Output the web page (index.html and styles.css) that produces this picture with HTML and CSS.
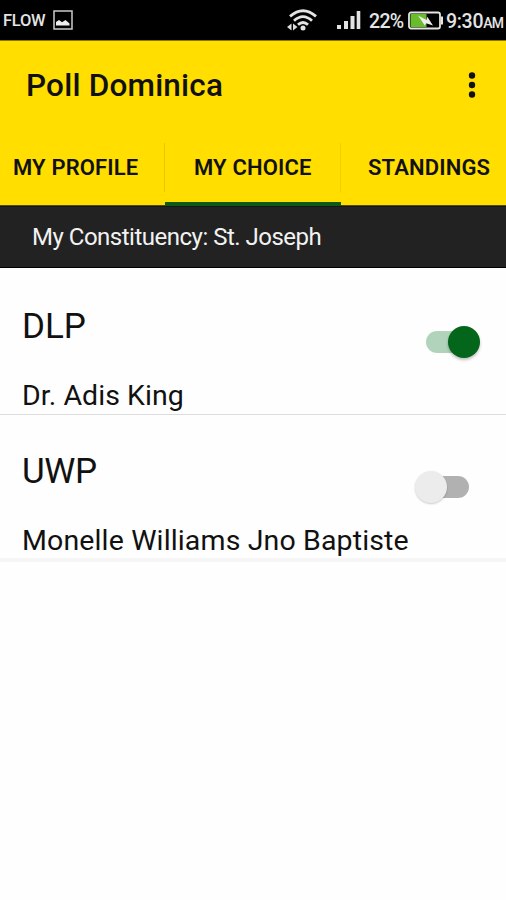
FILE: index.html
```html
<!DOCTYPE html>
<html lang="en">
<head>
<meta charset="utf-8">
<title>Poll Dominica</title>
<link rel="stylesheet" href="styles.css">
</head>
<body>
<div class="status">
  <span class="carrier">FLOW</span>
  <svg class="picture" width="20" height="20" viewBox="0 0 20 20"><rect x="1" y="1" width="18" height="18" fill="none" stroke="#ccc" stroke-width="1.5"/><path d="M3 15.5V12l3-2 3 2.3 3.5-2.3 4 3.5v2z" fill="#eee"/></svg>
  <svg class="wifi" width="32" height="24" viewBox="0 0 32 24"><g fill="none" stroke="#e4e4e4" stroke-width="2.8"><path d="M3 8.4Q16-3 29 8.4"/><path d="M7 12.8Q16 4.4 25 12.8"/><path d="M11 16.8Q16 12 21 16.8"/></g><circle cx="16" cy="20" r="2.5" fill="#e4e4e4"/><path d="M4.5 15.5v7L0 19zM6 15.5v7l4.5-3.5z" fill="#ddd"/></svg>
  <svg class="signal" width="25" height="20" viewBox="0 0 25 20"><path d="M1 15h4v4H1zM8 11h4v8H8zM14.5 6h4v13h-4zM20.7 1h3.6v18h-3.6z" fill="#e2e2e2"/></svg>
  <span class="percent">22%</span>
  <svg class="battery" width="36" height="19" viewBox="0 0 36 19"><rect x="1" y="1.5" width="31" height="16" rx="2" fill="#000" stroke="#e4e4e4" stroke-width="1.8"/><path d="M33 5.5h2v8h-2z" fill="#e4e4e4"/><path d="M2.5 3h16v13h-16z" fill="#69bd2b"/><path d="M10 4.5l8.5 4.5.8-3.3L25 14.5l-7-2.2-1.2 2.2z" fill="#eee"/></svg>
  <span class="clock">9:30<small>AM</small></span>
</div>
<header class="appbar">
  <h1>Poll Dominica</h1>
  <svg class="more" width="8" height="28" viewBox="0 0 8 28"><g fill="#111"><circle cx="4" cy="4.5" r="3.2"/><circle cx="4" cy="14" r="3.2"/><circle cx="4" cy="23.5" r="3.2"/></g></svg>
</header>
<nav class="tabs">
  <a class="tab profile">MY PROFILE</a>
  <a class="tab choice">MY CHOICE</a>
  <a class="tab standings">STANDINGS</a>
</nav>
<div class="constituency"><span>My Constituency: St. Joseph</span></div>
<main>
  <section class="item">
    <div class="info">
      <h2 class="dlp">DLP</h2>
      <p class="king">Dr. Adis King</p>
    </div>
    <div class="switch on"><i></i></div>
  </section>
  <section class="item last">
    <div class="info">
      <h2 class="uwp">UWP</h2>
      <p class="monelle">Monelle Williams Jno Baptiste</p>
    </div>
    <div class="switch off"><i></i></div>
  </section>
</main>
</body>
</html>
```
FILE: styles.css
```css
* { box-sizing: border-box; }
body {
  margin: 0;
  width: 506px;
  height: 900px;
  overflow: hidden;
  background: #fefefe;
  color: #111;
  font-family: Roboto, "Liberation Sans", sans-serif;
}
h1, h2, p { margin: 0; font-weight: 400; white-space: nowrap; }
svg { flex: none; display: block; }

.status {
  display: flex;
  align-items: center;
  height: 40px;
  background: #000;
  color: #e4e4e4;
  white-space: nowrap;
}
.carrier { width: 49px; padding: 1px 0 0 3px; font-size: 16.5px; font-weight: 500; line-height: 40px; letter-spacing: -0.3px; }
.picture { margin-left: 4px; }
.wifi { margin-left: 214px; }
.signal { margin-left: 17px; }
.percent { width: 39px; padding-top: 2px; margin-left: 8px; font-size: 19.5px; font-weight: 500; letter-spacing: -0.7px; }
.battery { margin-left: 0; }
.clock { padding-top: 2px; margin-left: 2px; font-size: 19.5px; font-weight: 500; letter-spacing: -0.3px; }
.clock small { font-size: 14px; letter-spacing: -0.8px; }

.appbar {
  display: flex;
  align-items: center;
  justify-content: space-between;
  height: 90px;
  padding: 0 30px 0 26px;
  background: #ffde00;
  border-top: 1px solid #8b7900;
}
.appbar h1 { font-size: 31.5px; font-weight: 500; letter-spacing: 0.2px; }
.more { margin-top: -2px; }

.tabs {
  display: grid;
  grid-template-columns: 165px 176px 165px;
  height: 76px;
  background: #ffde00;
  border-bottom: 1px solid #554b06;
}
.tab {
  display: flex;
  padding-top: 25px;
  font-size: 22px;
  font-weight: 600;
  line-height: 26px;
  letter-spacing: 0.15px;
  white-space: nowrap;
}
.profile { padding-left: 13px; background: linear-gradient(#e6c800, #e6c800) right 13px / 1px 49px no-repeat; }
.choice {
  padding-left: 29px;
  margin-bottom: -1px;
  border-bottom: 4px solid #0e5a14;
  background: linear-gradient(#edd000, #edd000) right 13px / 1px 49px no-repeat;
}
.standings { padding-left: 27px; }

.constituency {
  height: 62px;
  padding-left: 32px;
  background: #222;
  border-top: 1px solid #15151a;
  border-bottom: 1px solid #000;
  color: #f2f2f2;
  font-size: 24px;
  line-height: 60px;
  letter-spacing: -0.5px;
  white-space: nowrap;
}

.item {
  display: flex;
  justify-content: space-between;
  height: 147px;
  padding: 37px 0 0 22px;
  border-bottom: 1px solid #dcdcdc;
}
.item.last { height: 147px; padding-top: 35px; border-bottom: 4px solid #f6f6f6; }
.info h2 { height: 44px; font-size: 35px; line-height: 44px; }
.info p { margin-top: 29px; font-size: 28.5px; line-height: 36px; letter-spacing: 0.14px; }
.info .king { letter-spacing: 0.05px; }
.info .uwp { letter-spacing: -0.4px; }
.switch { display: flex; align-items: center; height: 22px; border-radius: 11px; margin-top: 26px; }
.switch i { width: 32px; height: 32px; border-radius: 50%; flex: none; }
.on { width: 50px; margin-right: 30px; background: #b2d3bb; justify-content: flex-end; }
.on i { background: #04661a; margin-right: -4px; box-shadow: 0 2px 3px rgba(0, 0, 0, .25); }
.off { width: 50px; margin-right: 37px; background: #b1b1b1; }
.off i { background: #ececec; margin-left: -4px; box-shadow: 0 1px 2px rgba(0, 0, 0, .2); }
```
